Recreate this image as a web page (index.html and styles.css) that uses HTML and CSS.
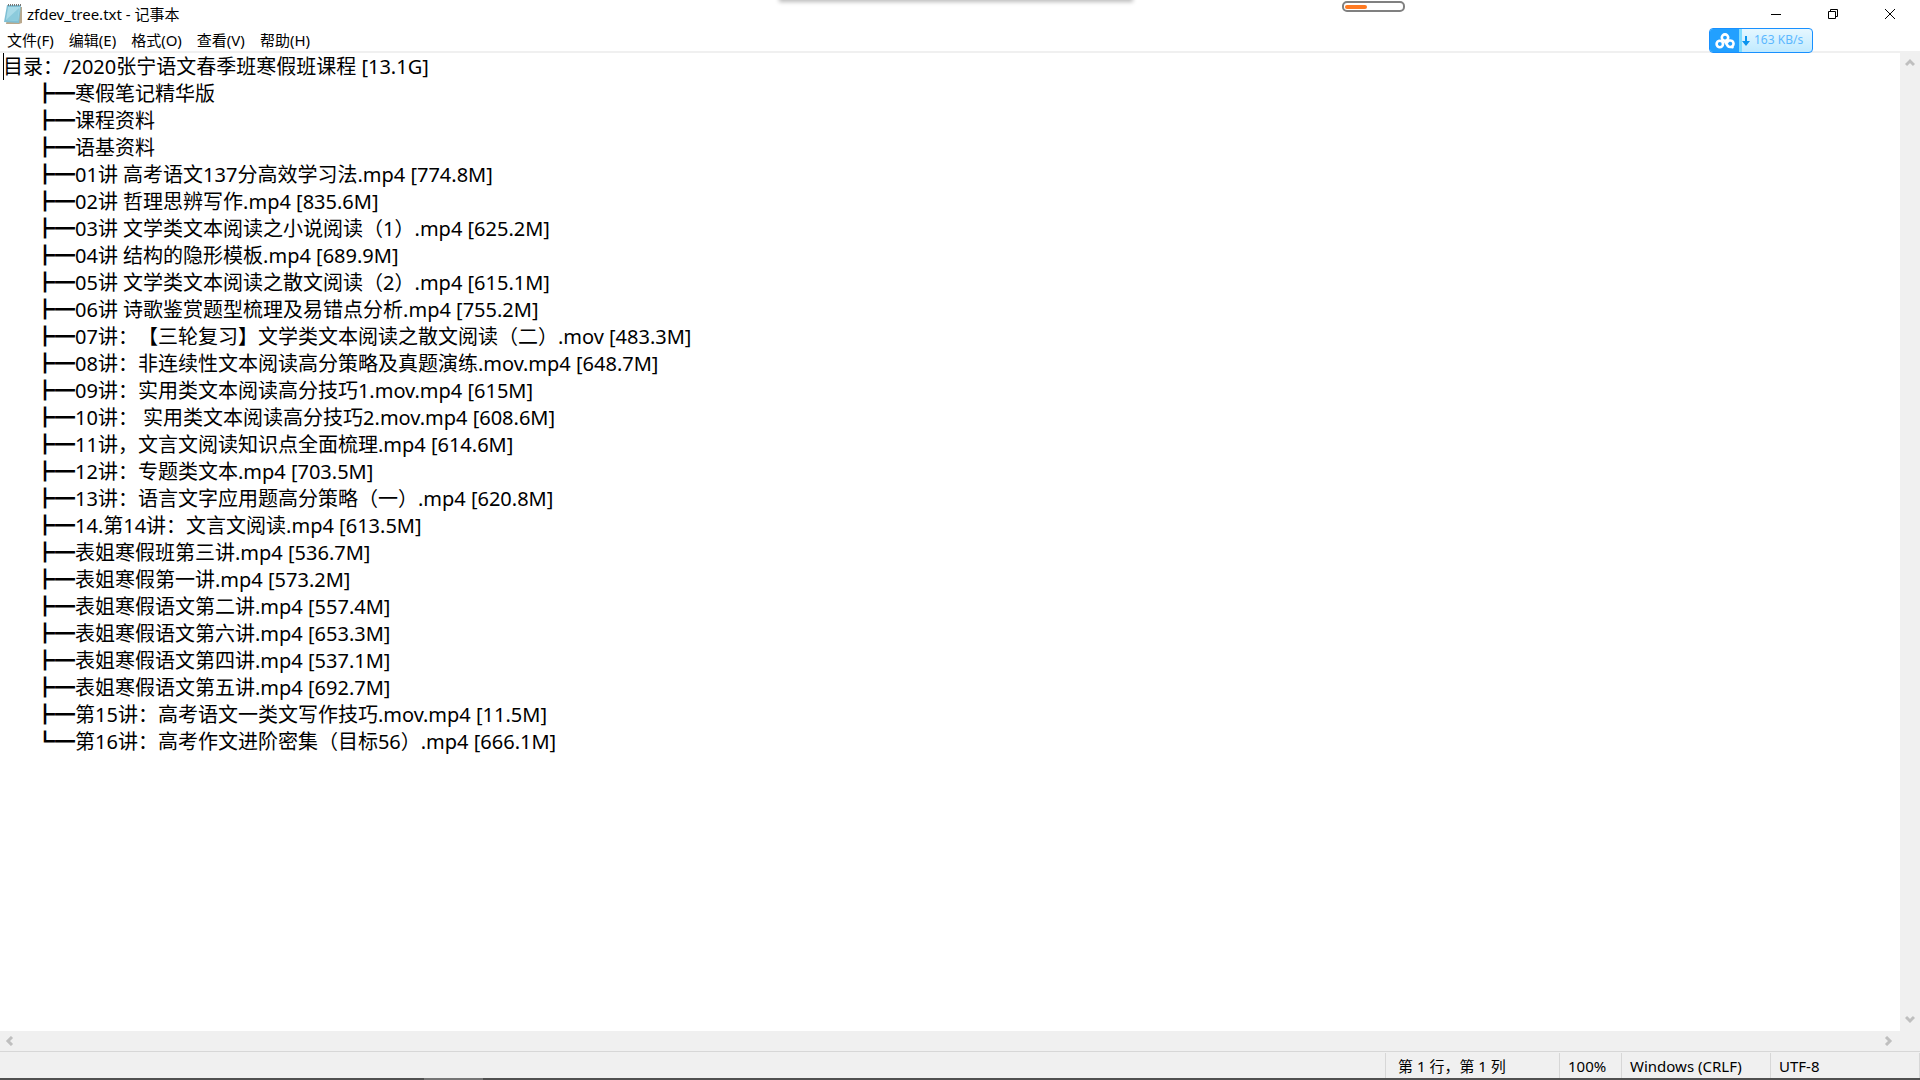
FILE: index.html
```html
<!DOCTYPE html>
<html lang="zh-CN">
<head>
<meta charset="utf-8">
<title>zfdev_tree.txt - 记事本</title>
<link rel="stylesheet" href="styles.css">
</head>
<body>
<div class="window">
  <header class="titlebar">
    <svg class="app-icon" viewBox="0 0 20 22" aria-hidden="true">
      <path d="M6 4h13v16l-3 1H3z" fill="#b9a88c"/>
      <path d="M4 2h14l-2 18-15-1z" fill="#7fbfd4"/>
      <path d="M5 4h12l-2 14-12-1z" fill="#a9dbe8"/>
      <path d="M4 16L16 5l-1 13-12-1z" fill="#8ccbdc"/>
      <path d="M5 2h13" stroke="#777" stroke-width="2" stroke-dasharray="1 1"/>
    </svg>
    <h1 class="title">zfdev_tree.txt - 记事本</h1>
    <div class="window-controls">
      <button class="control" aria-label="最小化"><svg viewBox="0 0 12 12"><path d="M1 6.500h10"/></svg></button>
      <button class="control" aria-label="还原"><svg viewBox="0 0 12 12"><path d="M1.500 3.500h7v7h-7zM3.500 3V1.500h7v7H9"/></svg></button>
      <button class="control" aria-label="关闭"><svg viewBox="0 0 12 12"><path d="M1 1l10 10M11 1L1 11"/></svg></button>
    </div>
  </header>
  <nav class="menubar">
    <button class="menu">文件(F)</button>
    <button class="menu">编辑(E)</button>
    <button class="menu">格式(O)</button>
    <button class="menu">查看(V)</button>
    <button class="menu">帮助(H)</button>
  </nav>
  <main class="editor">
    <div class="page">
      <textarea class="text" wrap="off" spellcheck="false" aria-label="文本编辑器">目录：/2020张宁语文春季班寒假班课程 [13.1G]
	┣━寒假笔记精华版
	┣━课程资料
	┣━语基资料
	┣━01讲 高考语文137分高效学习法.mp4 [774.8M]
	┣━02讲 哲理思辨写作.mp4 [835.6M]
	┣━03讲 文学类文本阅读之小说阅读（1）.mp4 [625.2M]
	┣━04讲 结构的隐形模板.mp4 [689.9M]
	┣━05讲 文学类文本阅读之散文阅读（2）.mp4 [615.1M]
	┣━06讲 诗歌鉴赏题型梳理及易错点分析.mp4 [755.2M]
	┣━07讲：【三轮复习】文学类文本阅读之散文阅读（二）.mov [483.3M]
	┣━08讲：非连续性文本阅读高分策略及真题演练.mov.mp4 [648.7M]
	┣━09讲：实用类文本阅读高分技巧1.mov.mp4 [615M]
	┣━10讲： 实用类文本阅读高分技巧2.mov.mp4 [608.6M]
	┣━11讲，文言文阅读知识点全面梳理.mp4 [614.6M]
	┣━12讲：专题类文本.mp4 [703.5M]
	┣━13讲：语言文字应用题高分策略（一）.mp4 [620.8M]
	┣━14.第14讲：文言文阅读.mp4 [613.5M]
	┣━表姐寒假班第三讲.mp4 [536.7M]
	┣━表姐寒假第一讲.mp4 [573.2M]
	┣━表姐寒假语文第二讲.mp4 [557.4M]
	┣━表姐寒假语文第六讲.mp4 [653.3M]
	┣━表姐寒假语文第四讲.mp4 [537.1M]
	┣━表姐寒假语文第五讲.mp4 [692.7M]
	┣━第15讲：高考语文一类文写作技巧.mov.mp4 [11.5M]
	┗━第16讲：高考作文进阶密集（目标56）.mp4 [666.1M]</textarea>
      <span class="caret"></span>
    </div>
    <div class="scroll vertical">
      <button class="arrow" aria-label="向上滚动"><svg viewBox="0 0 10 10"><path d="M1 7l4-4 4 4"/></svg></button>
      <button class="arrow" aria-label="向下滚动"><svg viewBox="0 0 10 10"><path d="M1 3l4 4 4-4"/></svg></button>
    </div>
    <div class="scroll horizontal">
      <button class="arrow" aria-label="向左滚动"><svg viewBox="0 0 10 10"><path d="M7 1L3 5l4 4"/></svg></button>
      <button class="arrow" aria-label="向右滚动"><svg viewBox="0 0 10 10"><path d="M3 1l4 4-4 4"/></svg></button>
    </div>
  </main>
  <footer class="statusbar">
    <span class="cell position">第 1 行，第 1 列</span>
    <span class="cell zoom">100%</span>
    <span class="cell ending">Windows (CRLF)</span>
    <span class="cell encoding">UTF-8</span>
  </footer>
  <div class="taskbar"><span class="taskbar-item"></span></div>
</div>
<div class="top-shadow"></div>
<div class="progress"><span class="progress-fill"></span></div>
<div class="speed">
  <span class="speed-logo"><svg viewBox="0 0 20 16"><g fill="none" stroke="#fff" stroke-width="2.600" stroke-linecap="round"><circle cx="10" cy="4.600" r="3.200"/><circle cx="4.800" cy="11" r="3.200"/><path d="M10 8.500l2.800 4.500a3.300 3.300 0 1 0-.6-3.600M16.500 14l1 .2"/></g></svg></span>
  <svg class="speed-arrow" viewBox="0 0 8 10"><path d="M3 0h2v5h3L4 10 0 5h3z" fill="#0a93ee"/></svg>
  <span class="speed-text">163 KB/s</span>
</div>
</body>
</html>
```
FILE: styles.css
```css
* { box-sizing: border-box; }
body {
  margin: 0;
  background: #fff;
  color: #000;
  font: 15px/20px "Noto Sans", "Noto Sans CJK SC", sans-serif;
}
button {
  margin: 0;
  padding: 0;
  border: 0;
  background: none;
  color: inherit;
  font: inherit;
}
svg { display: block; }
.window { display: flex; flex-direction: column; height: 100vh; }

.titlebar { display: flex; align-items: center; height: 28px; padding: 0 2px 0 3px; gap: 4px; }
.app-icon { width: 20px; height: 22px; }
.title { flex: 1; margin: 0; font-size: 15px; font-weight: 400; }
.window-controls { display: flex; }
.control { display: flex; align-items: center; justify-content: center; width: 57px; height: 26px; }
.control svg { width: 12px; height: 12px; fill: none; stroke: #000; }

.menubar { display: flex; gap: 15px; height: 25px; padding: 2px 7px; border-bottom: 2px solid #f0f0f0; }

.editor {
  flex: 1;
  min-height: 0;
  display: grid;
  grid-template: minmax(0, 1fr) 20px / minmax(0, 1fr) 20px;
  background: #f0f0f0;
}
.page { position: relative; display: flex; background: #fff; }
.text {
  flex: 1;
  margin: 0;
  padding: 0 3px;
  border: 0;
  outline: 0;
  resize: none;
  overflow: hidden;
  background: none;
  color: #000;
  font: 20px/27px "Noto Sans", "Noto Sans CJK SC", sans-serif;
  tab-size: 32px;
  text-spacing-trim: space-all;
}
.caret { position: absolute; left: 3px; top: 0; width: 1px; height: 27px; background: #000; }
.scroll { display: flex; justify-content: space-between; }
.vertical { flex-direction: column; padding-bottom: 2px; }
.horizontal { padding-right: 2px; }
.arrow { display: flex; align-items: center; justify-content: center; width: 20px; height: 20px; }
.arrow svg { width: 10px; height: 10px; fill: none; stroke: #bfbfbf; stroke-width: 3; }

.statusbar {
  display: flex;
  justify-content: flex-end;
  height: 27px;
  padding-top: 1px;
  border-top: 1px solid #d7d7d7;
  background: #f0f0f0;
}
.cell { padding: 3px 8px; border-left: 1px solid #d7d7d7; }
.position { width: 174px; padding-left: 12px; }
.zoom { width: 62px; }
.ending { width: 149px; }
.encoding { width: 150px; border-right: 1px solid #d7d7d7; }

.taskbar { height: 2px; padding-left: 424px; background: #505050; }
.taskbar-item { display: block; width: 59px; height: 2px; background: #757575; }

.top-shadow {
  position: absolute;
  top: -10px;
  left: 779px;
  width: 354px;
  height: 10px;
  box-shadow: 0 2px 4px 0 #bbb;
}
.progress {
  position: absolute;
  top: 1px;
  left: 1342px;
  width: 63px;
  height: 11px;
  padding: 2px 1px;
  border: 2px solid #808080;
  border-radius: 5px;
  background: #fff;
}
.progress-fill { display: block; width: 22px; height: 4px; border-radius: 2px; background: #ff7a22; }
.speed {
  position: absolute;
  top: 28px;
  right: 107px;
  display: flex;
  align-items: center;
  width: 104px;
  height: 25px;
  overflow: hidden;
  border: 1px solid #1890ff;
  border-radius: 4px;
  background: linear-gradient(#e6f7ff, #c0eaff);
}
.speed-logo {
  display: flex;
  align-items: center;
  justify-content: center;
  width: 32px;
  height: 25px;
  border-right: 3px solid #7fdcff;
  background: #22a0ff;
}
.speed-logo svg { width: 20px; height: 16px; }
.speed-arrow { width: 8px; height: 10px; }
.speed-text { padding: 0 0 2px 4px; color: #5cb8ff; font-size: 12px; }
```
